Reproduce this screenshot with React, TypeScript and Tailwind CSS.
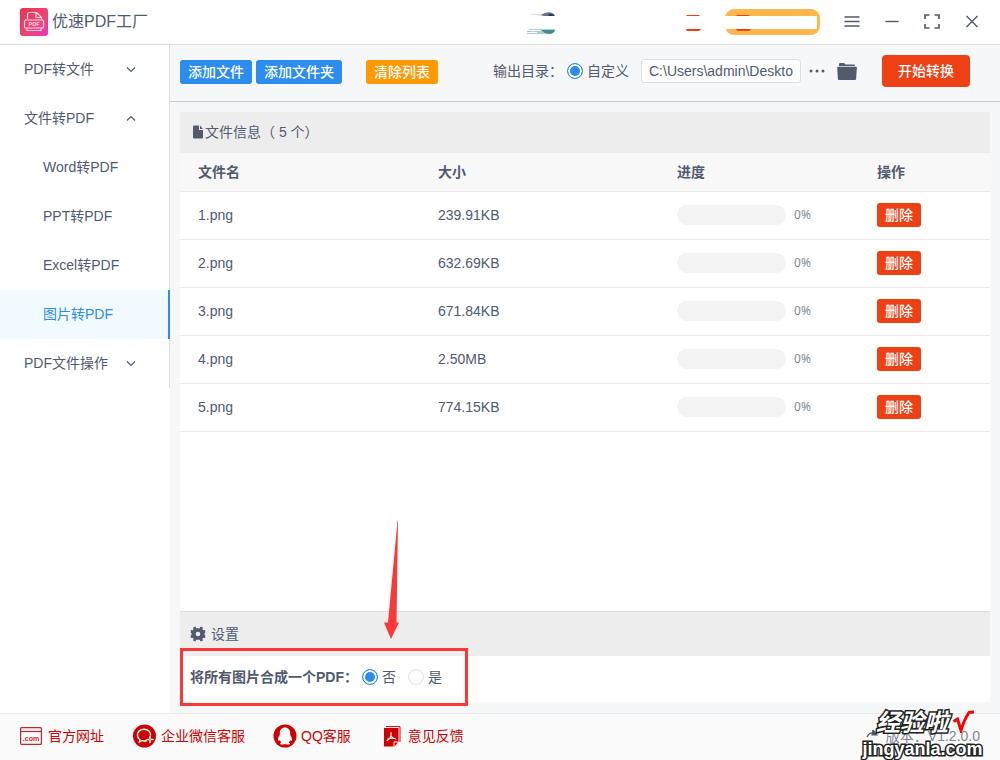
import React from 'react';

const files = [
  { name: '1.png', size: '239.91KB', progress: 0 },
  { name: '2.png', size: '632.69KB', progress: 0 },
  { name: '3.png', size: '671.84KB', progress: 0 },
  { name: '4.png', size: '2.50MB', progress: 0 },
  { name: '5.png', size: '774.15KB', progress: 0 },
];

const subItems = ['Word转PDF', 'PPT转PDF', 'Excel转PDF', '图片转PDF'];

const radioClass =
  'appearance-none w-4 h-4 shrink-0 rounded-full border border-[#dcdee2] bg-white checked:border-[#2d8cf0] checked:shadow-[inset_0_0_0_2px_white] checked:bg-[#2d8cf0] cursor-pointer';

function Logo() {
  return (
    <svg className="w-7 h-7 shrink-0" viewBox="0 0 28 28" fill="none">
      <defs>
        <linearGradient id="logo" x1="0" y1="0" x2="1" y2="1">
          <stop offset="0" stopColor="#e8354f" />
          <stop offset="0.6" stopColor="#ee4478" />
          <stop offset="1" stopColor="#e836b8" />
        </linearGradient>
      </defs>
      <rect width="28" height="28" rx="3" fill="url(#logo)" />
      <path d="M7.500 11V6.500a2 2 0 0 1 2-2h7l5 5V11M16 4.800V9.500h5M5.500 12h17a1 1 0 0 1 1 1v6a1 1 0 0 1-1 1h-17a1 1 0 0 1-1-1v-6a1 1 0 0 1 1-1zM7 20.500v2h14v-2" stroke="#ffdbe4" strokeWidth="1.200" strokeLinejoin="round" />
      <text x="14" y="18" textAnchor="middle" fontSize="5.500" fontWeight="bold" fontFamily="Liberation Sans, sans-serif" fill="#ffdbe4">PDF</text>
    </svg>
  );
}

function Chevron({ up = false }: { up?: boolean }) {
  return (
    <svg className="w-3 h-3" viewBox="0 0 12 12" fill="none" stroke="#515a6e" strokeWidth="1.200">
      <path d={up ? 'M2 8.500l4-4 4 4' : 'M2 4.500l4 4 4-4'} />
    </svg>
  );
}

function TitleBar() {
  return (
    <header className="flex items-center h-[45px] pl-5 pr-5 bg-white border-b border-[#dcdcdc]">
      <Logo />
      <h1 className="ml-1 text-base leading-6">优速PDF工厂</h1>

      <div className="ml-auto flex items-center">
        <svg className="w-[29px] h-[26px]" viewBox="0 0 29 26">
          <path d="M4 5.500h10q5-3 9-2.500q5 .5 5 4H16q-4-1-12-1z" fill="#c3c8d0" />
          <path d="M14 6q4-3 8-2.500 5 .5 5.500 3.500H17z" fill="#6a7383" />
          <path d="M22 4.500q5 0 5.500 2.500h-6z" fill="#263b4d" />
          <path d="M2 20h26q-1 5-6 5H0v-1h10v-1H0v-1h14v-1H2z" fill="#a9cfd0" />
          <path d="M14 21h14q-1 4-6 4l-4-1z" fill="#438c91" />
        </svg>
        <svg className="ml-[129px] w-4 h-[18px]" viewBox="0 0 16 18" fill="#ed4014">
          <path d="M2 2h12l1 1H1zM1 16h15q-1 2-2.500 2h-11Q1 18 1 16z" />
        </svg>
        <div className="ml-6 flex items-center w-[95px] h-[26px] pr-[3px] rounded-[9px] bg-[#ffb74d]">
          <svg className="w-full h-[18px]" viewBox="0 0 92 18">
            <path d="M12 2h12l1 1H11zM11 16h15q-1 2-2.500 2h-10Q11 18 11 16z" fill="#ed4014" />
            <rect y="3" width="92" height="13" fill="white" />
          </svg>
        </div>
      </div>

      <div className="ml-6 flex items-center gap-6">
        <button aria-label="菜单" className="cursor-pointer">
          <svg className="w-4 h-4" viewBox="0 0 16 16" stroke="#515a6e" strokeWidth="1.400">
            <path d="M.5 3h15M.5 7.500h15M.5 12h15" />
          </svg>
        </button>
        <button aria-label="最小化" className="cursor-pointer">
          <svg className="w-4 h-4" viewBox="0 0 16 16" stroke="#515a6e" strokeWidth="1.400">
            <path d="M1.500 7.500h13" />
          </svg>
        </button>
        <button aria-label="最大化" className="cursor-pointer">
          <svg className="w-4 h-4" viewBox="0 0 16 16" fill="none" stroke="#515a6e" strokeWidth="1.700">
            <path d="M1 5V1h4.500M10.500 1H15v4M15 10v4h-4.500M5.500 14H1v-4" />
          </svg>
        </button>
        <button aria-label="关闭" className="cursor-pointer">
          <svg className="w-4 h-4" viewBox="0 0 16 16" stroke="#515a6e" strokeWidth="1.400">
            <path d="M2.500 2l11 11M13.500 2l-11 11" />
          </svg>
        </button>
      </div>
    </header>
  );
}

function Sidebar() {
  return (
    <aside className="w-[170px] shrink-0 bg-white">
      <nav className="text-sm">
        <button className="flex items-center justify-between w-full h-[49px] pl-6 pr-8 pb-0.5 border-r border-[#dcdee2] cursor-pointer">
          PDF转文件
          <Chevron />
        </button>
        <button className="flex items-center justify-between w-full h-[49px] pl-6 pr-8 pb-0.5 border-r border-[#dcdee2] cursor-pointer">
          文件转PDF
          <Chevron up />
        </button>
        {subItems.map((item) => (
          <a
            key={item}
            href="#"
            className={
              item === '图片转PDF'
                ? 'flex items-center h-[49px] pl-[43px] pb-0.5 bg-[#f0faff] text-[#2d8cf0] border-r-2 border-[#2d8cf0]'
                : 'flex items-center h-[49px] pl-[43px] pb-0.5 border-r border-[#dcdee2]'
            }
          >
            {item}
          </a>
        ))}
        <button className="flex items-center justify-between w-full h-[49px] pl-6 pr-8 pb-0.5 border-r border-[#dcdee2] cursor-pointer">
          PDF文件操作
          <Chevron />
        </button>
      </nav>
    </aside>
  );
}

function Toolbar() {
  return (
    <div className="flex items-center h-[57px] pl-2.5 pr-[30px] pb-1 border-b border-[#c8cacd] text-sm">
      <div className="flex items-center pt-0.5">
        <button className="h-6 px-2 rounded-[3px] bg-[#2d8cf0] text-white font-medium cursor-pointer">添加文件</button>
        <button className="ml-1 h-6 px-2 rounded-[3px] bg-[#2d8cf0] text-white font-medium cursor-pointer">添加文件夹</button>
        <button className="ml-6 h-6 px-2 rounded-[3px] bg-[#ff9900] text-white font-medium cursor-pointer">清除列表</button>
      </div>

      <div className="ml-auto flex items-center">
        <span>输出目录：</span>
        <label className="ml-1 flex items-center gap-1">
          <input type="radio" name="output" defaultChecked className={radioClass} />
          自定义
        </label>
        <input
          type="text"
          aria-label="输出目录"
          defaultValue="C:\Users\admin\Deskto"
          className="ml-3 w-40 h-6 px-[7px] bg-white border border-[#dcdee2] rounded-[3px]"
        />
        <button aria-label="更多" className="ml-2 cursor-pointer">
          <svg className="w-4 h-4" viewBox="0 0 16 16" fill="#515a6e">
            <circle cx="2" cy="8" r="1.500" />
            <circle cx="8" cy="8" r="1.500" />
            <circle cx="14" cy="8" r="1.500" />
          </svg>
        </button>
        <button aria-label="打开目录" className="ml-3 cursor-pointer">
          <svg className="w-5 h-5" viewBox="0 0 20 20" fill="#515a6e">
            <path d="M2 4V3q0-1 1-1h4l1.500 1.500H17q1 0 1 1V5H2z" />
            <path d="M1 5.700h18q1 0 .9 1l-.8 11.300q-.1 1-1.100 1H2q-1 0-1.100-1L.2 6.700q-.1-1 .8-1z" />
          </svg>
        </button>
        <button className="ml-[25px] h-8 px-4 rounded bg-[#ed4014] text-white font-medium cursor-pointer">开始转换</button>
      </div>
    </div>
  );
}

function FileTable() {
  return (
    <table className="w-full table-fixed text-sm text-left">
      <thead>
        <tr className="h-[38px] bg-[#f8f8f9] border-b border-[#e8eaec]">
          <th className="w-60 px-[18px] font-bold">文件名</th>
          <th className="w-[239px] px-[18px] font-bold">大小</th>
          <th className="w-[200px] px-[18px] font-bold">进度</th>
          <th className="px-[18px] font-bold">操作</th>
        </tr>
      </thead>
      <tbody>
        {files.map((file) => (
          <tr key={file.name} className="h-12 border-b border-[#e8eaec]">
            <td className="px-[18px]">{file.name}</td>
            <td className="px-[18px]">{file.size}</td>
            <td className="px-[18px]">
              <div className="flex items-center gap-2">
                <div className="w-[109px] h-5 rounded-full bg-[#f3f3f3] overflow-hidden">
                  <div className="h-full bg-[#2d8cf0]" style={{ width: `${file.progress}%` }} />
                </div>
                <span className="text-xs text-[#808695] font-['Noto_Sans',sans-serif]">{file.progress}%</span>
              </div>
            </td>
            <td className="px-[18px]">
              <button className="block h-6 px-2 rounded-[3px] bg-[#ed4014] text-white font-medium cursor-pointer">删除</button>
            </td>
          </tr>
        ))}
      </tbody>
    </table>
  );
}

function Settings() {
  return (
    <section className="relative text-sm">
      <h2 className="flex items-center gap-[5px] h-[45px] pl-2.5 bg-[#ededed] border-t border-[#dcdee2]">
        <svg className="w-4 h-4" viewBox="0 0 16 16">
          <path
            fill="#515a6e"
            fillRule="evenodd"
            d="M6.200 2.200L5.500.6 3 1.600l.6 1.700-1.100 1L.8 4v3l1.300 1-1.300 1v3l1.700-.3 1.100 1L3 14.400l2.500 1 .7-1.600h3.600l.7 1.600 2.500-1-.6-1.700 1.100-1 1.700.3V9l-1.300-1 1.300-1V4l-1.700.3-1.100-1 .6-1.700-2.500-1-.7 1.600zM8 5.700a2.300 2.300 0 1 1 0 4.600 2.300 2.300 0 0 1 0-4.600z"
          />
        </svg>
        设置
      </h2>
      <fieldset className="flex items-center h-[46px] pl-2.5 pb-1 bg-white">
        <span id="merge-label" className="font-bold">将所有图片合成一个PDF：</span>
        <div role="radiogroup" aria-labelledby="merge-label" className="ml-1 flex items-center gap-3">
          <label className="flex items-center gap-1">
            <input type="radio" name="merge" defaultChecked className={radioClass} />否
          </label>
          <label className="flex items-center gap-1">
            <input type="radio" name="merge" className={radioClass} />是
          </label>
        </div>
      </fieldset>

      {/* callout around the merge option */}
      <div className="absolute left-0 top-[37px] w-72 h-[58px] border-3 border-[#fb3838] pointer-events-none" />
      <svg className="absolute left-[203px] -top-[90px] w-[17px] h-[118px] pointer-events-none" viewBox="0 0 17 118" fill="#fb3838">
        <path d="M14.500 0h.5L13.500 101.500H16L8 118 1 101.500h4z" />
      </svg>
    </section>
  );
}

function Footer() {
  return (
    <footer className="relative flex items-center h-[47px] pl-5 pr-5 pb-0.5 bg-[#fafafa] border-t border-[#e8eaec] text-sm text-[#cc0000]">
      <a href="#" className="flex items-center gap-1.5">
        <svg className="w-[22px] h-[18px]" viewBox="0 0 22 18" fill="none" stroke="#c1272d" strokeWidth="1.200">
          <rect x=".6" y=".6" width="20.800" height="16.800" rx="1" />
          <path d="M1 4.500h20" />
          <text x="11" y="14" textAnchor="middle" fontSize="7" fontWeight="bold" fontFamily="Liberation Sans, sans-serif" fill="#c1272d" stroke="none">.com</text>
        </svg>
        官方网址
      </a>
      <a href="#" className="ml-7 flex items-center gap-[5px]">
        <svg className="w-6 h-6" viewBox="0 0 24 24" fill="none">
          <circle cx="12.500" cy="12" r="11.500" fill="#cc0000" />
          <path d="M18.500 11.500c.3-3.700-2.500-6.300-6.300-6.300-3.900 0-6.800 2.500-6.800 5.800 0 2 1 3.600 2.500 4.700l-.5 2.300 2.500-1.300c1.700.5 3.500.4 5-.2" stroke="white" strokeWidth="1.400" />
          <path d="M18 12.700v1.500m0 2.600v1.500m-2.800-2.800h1.500m2.600 0h1.500" stroke="white" strokeWidth="1.700" strokeLinecap="round" />
        </svg>
        企业微信客服
      </a>
      <a href="#" className="ml-7 flex items-center gap-1">
        <svg className="w-6 h-6" viewBox="0 0 24 24">
          <circle cx="12" cy="12" r="11.500" fill="#cc0000" />
          <path d="M12 3.500c-3.300 0-5.200 2.400-5.200 5.500v2c-1.500 2-2.300 4.500-1.600 5.900.3.500 1.100-.2 1.600-.9.200 1 .8 1.800 1.500 2.400-1 .5-1.500 1.200-1 1.800.6.700 3.400.5 4.700-.5 1.300 1 4.100 1.200 4.700.5.500-.6 0-1.300-1-1.800.7-.6 1.300-1.400 1.500-2.400.5.700 1.300 1.400 1.600.9.700-1.400-.1-3.900-1.600-5.900V9c0-3.100-1.900-5.500-5.200-5.500z" fill="white" />
        </svg>
        QQ客服
      </a>
      <a href="#" className="ml-8 flex items-center gap-[7px]">
        <svg className="w-[18px] h-[21px]" viewBox="0 0 18 21" fill="none">
          <path d="M3 .6h14V16" stroke="#cc0000" strokeWidth="1" />
          <path d="M1 2h14.500v14l-4 4.500H1z" fill="#cc0000" />
          <path d="M11 20.500V16h4.500" stroke="white" />
          <path d="M8 6.500v3.500m0 0q-1 3-4 4.500M8 10q1 2 4.500 3M5 13q3-1.500 6.500-.5" stroke="white" strokeWidth="1.200" strokeLinecap="round" />
        </svg>
        意见反馈
      </a>

      <div className="ml-auto flex items-center gap-2 text-[#808695]">
        <svg className="w-3 h-3" viewBox="0 0 12 12" fill="none" stroke="#515a6e" strokeWidth="1.200">
          <path d="M1 7q2-5 7-4" />
          <path d="M7 0l4 5H6z" fill="#515a6e" />
        </svg>
        <span>版本：V1.2.0.0</span>
      </div>

      {/* site watermark over the version number */}
      <div className="absolute right-[15px] -bottom-px w-[125px] h-[52px] flex flex-col items-center font-bold text-white whitespace-nowrap [paint-order:stroke_fill] pointer-events-none">
        <div className="flex items-start w-full h-7 pl-4">
          <span className="text-2xl leading-7 italic [-webkit-text-stroke:3px_#222]">经验啦</span>
          <svg className="ml-1 w-6 h-6" viewBox="0 0 24 24" fill="none" stroke="#f00" strokeWidth="3">
            <path d="M1.500 12.500l4-2.500 3.500 11.500Q12 11 17 3.500l5-.5" />
          </svg>
        </div>
        <span className="text-lg leading-6 [-webkit-text-stroke:3px_#222]">jingyanla.com</span>
      </div>
    </footer>
  );
}

export default function App() {
  return (
    <div className="flex flex-col min-h-screen bg-[#f5f7f9] text-[#515a6e] font-['Liberation_Sans','Noto_Sans_CJK_SC',sans-serif]">
      <TitleBar />
      <div className="flex flex-1">
        <Sidebar />
        <main className="flex-1 min-w-0 flex flex-col">
          <Toolbar />
          <div className="flex-1 flex flex-col mx-2.5 mt-2.5 mb-[11px]">
            <section className="flex-1 bg-white">
              <h2 className="flex items-center h-[41px] pl-3 pb-0.5 bg-[#ededed] text-sm">
                <svg className="w-[13px] h-[14px]" viewBox="0 0 13 14" fill="#515a6e">
                  <path d="M1 1.500Q1 .5 2 .5h5V5h4v7.500q0 1-1 1H2q-1 0-1-1z" />
                  <path d="M8 .5L11 4H8z" />
                </svg>
                文件信息（ 5 个）
              </h2>
              <FileTable />
            </section>
            <Settings />
          </div>
        </main>
      </div>
      <Footer />
    </div>
  );
}
